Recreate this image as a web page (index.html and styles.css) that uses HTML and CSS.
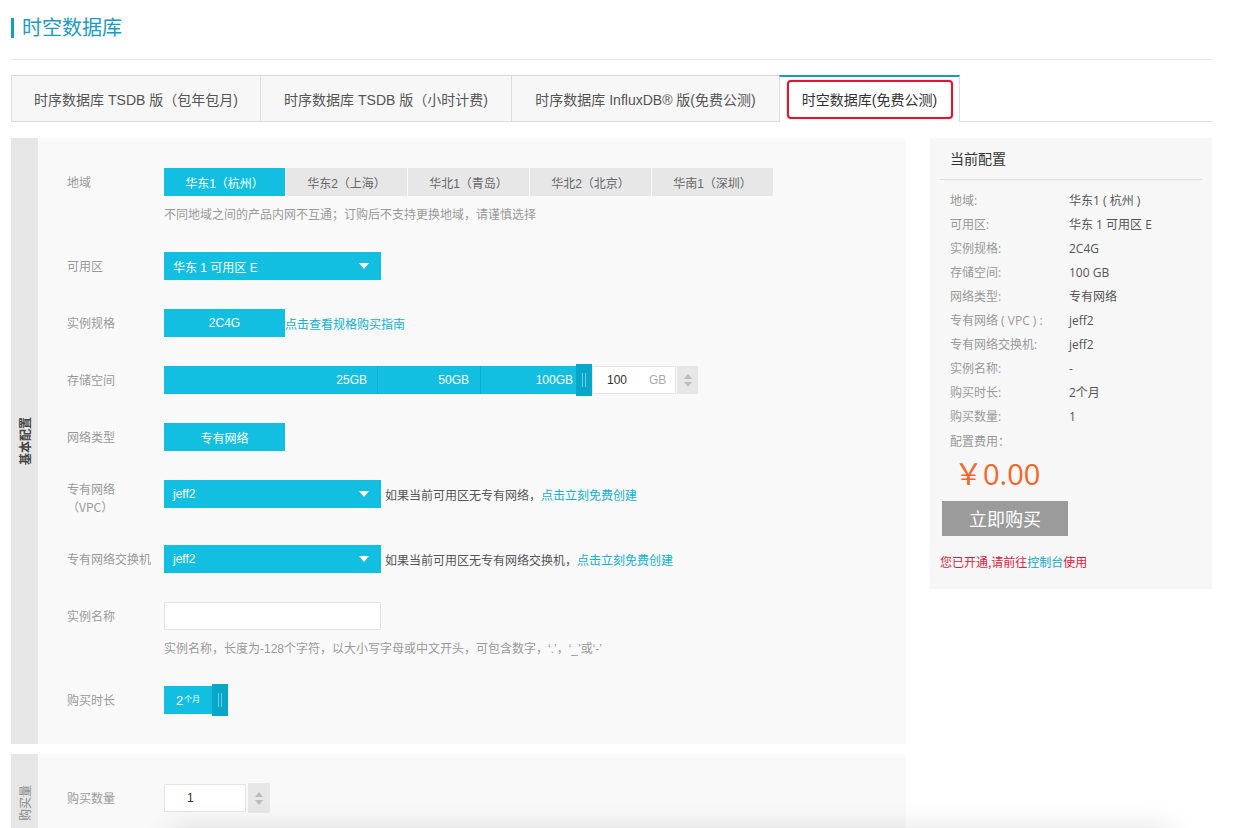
FILE: index.html
```html
<!DOCTYPE html>
<html lang="zh-CN">
<head>
<meta charset="utf-8">
<title>时空数据库</title>
<link rel="stylesheet" href="styles.css">
</head>
<body>
<div class="page">
  <header class="head"><h1 class="title">时空数据库</h1></header>

  <nav class="tabs">
    <div class="tab tab-1">时序数据库 TSDB 版（包年包月)</div>
    <div class="tab tab-2">时序数据库 TSDB 版（小时计费)</div>
    <div class="tab tab-3">时序数据库 InfluxDB® 版(免费公测)</div>
    <div class="tab tab-active">时空数据库(免费公测)<span class="mark"></span></div>
  </nav>

  <div class="main">
    <div class="forms">
      <section class="panel">
        <div class="strip"><span class="strip-text">基本配置</span></div>
        <div class="form">
          <div class="row">
            <div class="label">地域</div>
            <div class="field">
              <div class="opts">
                <div class="opt on">华东1（杭州）</div>
                <div class="opt">华东2（上海）</div>
                <div class="opt">华北1（青岛）</div>
                <div class="opt">华北2（北京）</div>
                <div class="opt">华南1（深圳）</div>
              </div>
              <div class="hint">不同地域之间的产品内网不互通；订购后不支持更换地域，请谨慎选择</div>
            </div>
          </div>

          <div class="row">
            <div class="label">可用区</div>
            <div class="ctrl">
              <div class="select"><span>华东 1 可用区 E</span><i class="caret"></i></div>
            </div>
          </div>

          <div class="row">
            <div class="label">实例规格</div>
            <div class="ctrl">
              <div class="btn">2C4G</div><a class="link">点击查看规格购买指南</a>
            </div>
          </div>

          <div class="row">
            <div class="label">存储空间</div>
            <div class="ctrl">
              <div class="track">
                <div class="seg seg-1">25GB</div>
                <div class="seg seg-2">50GB</div>
                <div class="seg seg-3">100GB</div>
              </div>
              <div class="handle"><span class="grip"></span></div>
              <div class="num num-gb"><span class="num-val">100</span><span class="num-unit">GB</span></div>
              <div class="spin"><i class="up"></i><i class="down"></i></div>
            </div>
          </div>

          <div class="row">
            <div class="label">网络类型</div>
            <div class="ctrl"><div class="btn">专有网络</div></div>
          </div>

          <div class="row">
            <div class="label label-2">专有网络<br>（VPC）</div>
            <div class="ctrl">
              <div class="select"><span>jeff2</span><i class="caret"></i></div>
              <span class="note">如果当前可用区无专有网络，<a class="link">点击立刻免费创建</a></span>
            </div>
          </div>

          <div class="row">
            <div class="label">专有网络交换机</div>
            <div class="ctrl">
              <div class="select"><span>jeff2</span><i class="caret"></i></div>
              <span class="note">如果当前可用区无专有网络交换机，<a class="link">点击立刻免费创建</a></span>
            </div>
          </div>

          <div class="row">
            <div class="label">实例名称</div>
            <div class="field">
              <div class="input"></div>
              <div class="hint">实例名称，长度为-128个字符，以大小写字母或中文开头，可包含数字，‘.’，‘_’或‘-’</div>
            </div>
          </div>

          <div class="row">
            <div class="label">购买时长</div>
            <div class="ctrl">
              <div class="fill">2<sup class="unit">个月</sup></div>
              <div class="handle"><span class="grip"></span></div>
            </div>
          </div>
        </div>
      </section>

      <section class="panel panel-2">
        <div class="strip"><span class="strip-text strip-light">购买量</span></div>
        <div class="form">
          <div class="row">
            <div class="label">购买数量</div>
            <div class="ctrl">
              <div class="num num-qty">1</div>
              <div class="spin spin-tall"><i class="up"></i><i class="down"></i></div>
            </div>
          </div>
        </div>
      </section>
    </div>

    <aside class="summary">
      <div class="sum-title">当前配置</div>
      <div class="sum-list">
        <div class="sum-row"><span class="k">地域:</span><span class="v">华东1 ( 杭州 )</span></div>
        <div class="sum-row"><span class="k">可用区:</span><span class="v">华东 1 可用区 E</span></div>
        <div class="sum-row"><span class="k">实例规格:</span><span class="v">2C4G</span></div>
        <div class="sum-row"><span class="k">存储空间:</span><span class="v">100 GB</span></div>
        <div class="sum-row"><span class="k">网络类型:</span><span class="v">专有网络</span></div>
        <div class="sum-row"><span class="k">专有网络 ( VPC ) :</span><span class="v">jeff2</span></div>
        <div class="sum-row"><span class="k">专有网络交换机:</span><span class="v">jeff2</span></div>
        <div class="sum-row"><span class="k">实例名称:</span><span class="v">-</span></div>
        <div class="sum-row"><span class="k">购买时长:</span><span class="v">2个月</span></div>
        <div class="sum-row"><span class="k">购买数量:</span><span class="v">1</span></div>
        <div class="sum-row sum-fee"><span class="k">配置费用：</span></div>
        <div class="price">￥0.00</div>
      </div>
      <div class="buy">立即购买</div>
      <div class="opened">您已开通,请前往<a class="link-c">控制台</a>使用</div>
    </aside>
  </div>
</div>
<div class="shade"></div>
</body>
</html>
```

FILE: styles.css
```css
html, body {
  margin: 0;
  height: 100%;
  overflow: hidden;
  background: #fff;
}
body {
  font-family: "Liberation Sans", "Noto Sans CJK SC", sans-serif;
  font-size: 12px;
  color: #333;
}
.page {
  padding: 0 31px 0 11px;
}

/* header */
.head {
  padding: 18px 0 21px;
  border-bottom: 1px solid #e5e5e5;
}
.title {
  margin: 0;
  font-size: 20px;
  line-height: 20px;
  font-weight: normal;
  color: #1a9bc3;
  border-left: 3px solid #1a9bc3;
  padding-left: 8px;
}

/* tabs */
.tabs {
  margin-top: 15px;
  display: flex;
  align-items: flex-start;
  border-bottom: 1px solid #dcdcdc;
  height: 46px;
}
.tab {
  height: 46px;
  box-sizing: border-box;
  border: 1px solid #dcdcdc;
  border-bottom: 0;
  margin-right: -1px;
  background: #f7f7f7;
  display: flex;
  align-items: center;
  justify-content: center;
  font-size: 14px;
  color: #555;
  white-space: nowrap;
}
.tab-1 { width: 250px; }
.tab-2 { width: 252px; }
.tab-3 { width: 269px; }
.tab-active {
  position: relative;
  width: 181px;
  height: 47px;
  background: #fff;
  border-top: 2px solid #1a9bc3;
  padding-bottom: 2px;
  color: #333;
}
.mark {
  position: absolute;
  top: 3px;
  left: 7px;
  right: 6px;
  bottom: 3px;
  border: 2px solid #e2142f;
  border-radius: 4px;
  box-shadow: 0 0 2px rgba(226, 20, 47, 0.35);
}

/* main */
.main {
  display: flex;
  align-items: flex-start;
  gap: 24px;
  margin-top: 16px;
}
.forms {
  width: 895px;
  flex: none;
}
.panel {
  display: flex;
  background: #f9f9f9;
}
.panel-2 {
  margin-top: 10px;
}
.strip {
  width: 27px;
  flex: none;
  background: #e6e6e6;
  display: flex;
  align-items: center;
  justify-content: center;
}
.strip-text {
  writing-mode: vertical-rl;
  text-orientation: sideways;
  transform: rotate(180deg);
  font-family: "Noto Sans CJK SC", sans-serif;
  font-size: 12px;
  font-weight: bold;
  color: #444;
}
.strip-light {
  color: #8a8a8a;
  font-weight: normal;
}
.form {
  flex: 1;
  padding: 30px 0 30px 29px;
}
.panel-2 .form {
  padding-bottom: 40px;
}
.row {
  display: flex;
  margin-bottom: 29px;
}
.row:last-child {
  margin-bottom: 0;
}
.label {
  width: 97px;
  flex: none;
  line-height: 28px;
  color: #999;
  font-family: "Noto Sans CJK SC", sans-serif;
}
.label-2 {
  line-height: 18px;
}
.field {
  display: flex;
  flex-direction: column;
}
.ctrl {
  display: flex;
  align-items: center;
  height: 28px;
}
.hint {
  margin-top: 11px;
  line-height: 16px;
  color: #999;
}

/* region options */
.opts {
  display: flex;
  gap: 1px;
}
.opt {
  width: 121px;
  height: 28px;
  background: #e7e7e7;
  color: #666;
  display: flex;
  align-items: center;
  justify-content: center;
}
.opt.on {
  background: #13bfe0;
  color: #fff;
}

/* select */
.select {
  width: 217px;
  height: 28px;
  box-sizing: border-box;
  padding: 0 8px 0 9px;
  background: #13bfe0;
  color: #fff;
  display: flex;
  align-items: center;
  justify-content: space-between;
}
.caret {
  width: 0;
  height: 0;
  border-left: 5px solid transparent;
  border-right: 5px solid transparent;
  border-top: 6px solid #fff;
  margin-right: 4px;
}
.note {
  margin-left: 4px;
  color: #555;
}
.link {
  color: #13b0d3;
  cursor: pointer;
}

/* button */
.btn {
  width: 121px;
  height: 28px;
  background: #13bfe0;
  color: #fff;
  display: flex;
  align-items: center;
  justify-content: center;
}

/* storage slider */
.track {
  display: flex;
  height: 28px;
  background: #13bfe0;
  color: #fff;
}
.seg {
  box-sizing: border-box;
  line-height: 28px;
  text-align: right;
}
.seg-1 {
  width: 214px;
  padding-right: 10px;
  border-right: 1px solid #0fadcd;
}
.seg-2 {
  width: 103px;
  padding-right: 11px;
  border-right: 1px solid #0fadcd;
}
.seg-3 {
  width: 95px;
  padding-right: 3px;
}
.handle {
  width: 16px;
  height: 32px;
  background: #08a6c9;
  display: flex;
  align-items: center;
  justify-content: center;
}
.grip {
  width: 2px;
  height: 14px;
  border-left: 1px solid #64d0e8;
  border-right: 1px solid #64d0e8;
}
.num {
  height: 28px;
  box-sizing: border-box;
  background: #fff;
  border: 1px solid #e5e5e5;
  display: flex;
  align-items: center;
  color: #333;
}
.num-gb {
  width: 84px;
  padding-left: 14px;
}
.num-unit {
  margin-left: 22px;
  color: #aaa;
}
.num-qty {
  width: 82px;
  padding-left: 22px;
}
.spin {
  width: 21px;
  height: 28px;
  margin-left: 1px;
  background: #e7e7e7;
  display: flex;
  flex-direction: column;
  align-items: center;
  justify-content: center;
  gap: 3px;
}
.spin-tall {
  width: 22px;
  height: 30px;
  margin-left: 2px;
}
.up {
  width: 0;
  height: 0;
  border-left: 4px solid transparent;
  border-right: 4px solid transparent;
  border-bottom: 5px solid #bdbdbd;
}
.down {
  width: 0;
  height: 0;
  border-left: 4px solid transparent;
  border-right: 4px solid transparent;
  border-top: 5px solid #bdbdbd;
}

/* instance name */
.input {
  width: 217px;
  height: 28px;
  box-sizing: border-box;
  background: #fff;
  border: 1px solid #e3e3e3;
}

/* duration slider */
.fill {
  width: 48px;
  height: 28px;
  background: #13bfe0;
  color: #fff;
  font-size: 13px;
  display: flex;
  align-items: center;
  justify-content: center;
}
.unit {
  font-size: 8px;
  margin-left: 1px;
  position: relative;
  top: -2px;
}

/* summary */
.summary {
  width: 282px;
  flex: none;
  box-sizing: border-box;
  background: #f7f7f7;
  padding: 0 10px 19px;
  font-family: "Open Sans", "Noto Sans CJK SC", sans-serif;
}
.sum-title {
  padding: 0 10px;
  line-height: 41px;
  font-size: 14px;
  color: #333;
  border-bottom: 1px solid #ddd;
  font-family: "Noto Sans CJK SC", sans-serif;
}
.sum-list {
  padding: 9px 10px 0;
}
.sum-row {
  display: flex;
  line-height: 24px;
}
.sum-fee {
  margin-top: 1px;
}
.k {
  width: 119px;
  flex: none;
  color: #999;
}
.v {
  color: #555;
}
.price {
  margin-top: 2px;
  padding-left: 4px;
  font-size: 29px;
  line-height: 36px;
  color: #f4652a;
}
.buy {
  margin: 9px 0 0 2px;
  width: 126px;
  height: 35px;
  line-height: 35px;
  background: #9b9b9b;
  color: #fff;
  font-size: 18px;
  text-align: center;
  font-family: "Noto Sans CJK SC", sans-serif;
}
.opened {
  margin-top: 18px;
  line-height: 16px;
  color: #e5183c;
  font-family: "Noto Sans CJK SC", sans-serif;
}
.link-c {
  color: #0ba6cc;
}

/* bottom shadow of a floating bar below the viewport */
.shade {
  position: fixed;
  left: 170px;
  width: 1000px;
  bottom: -24px;
  height: 24px;
  box-shadow: 0 0 28px rgba(0, 0, 0, 0.12);
  background: #fafafa;
  pointer-events: none;
}
```
